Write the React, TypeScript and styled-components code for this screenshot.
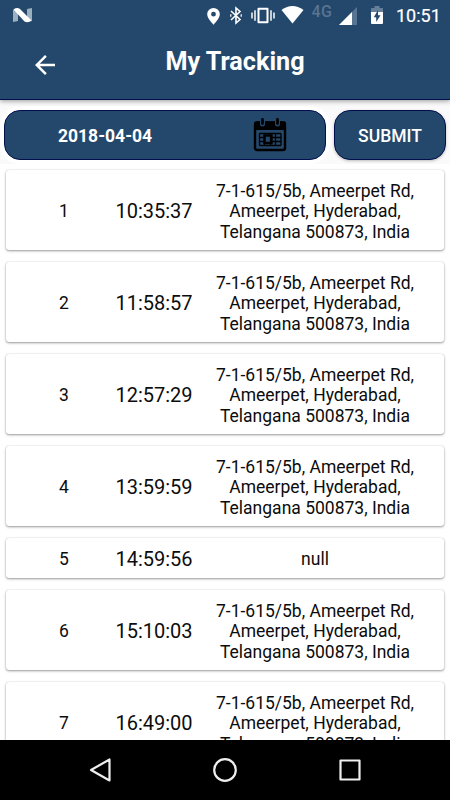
import React from "react";
import styled, { createGlobalStyle } from "styled-components";

const BLUE = "#24486c";

const GlobalStyle = createGlobalStyle`
  * { box-sizing: border-box; }
  body { margin: 0; background: #fff; font-family: Roboto, sans-serif; overflow: hidden; }
`;

const Screen = styled.div`
  width: 450px;
  height: 800px;
  display: flex;
  flex-direction: column;
  overflow: hidden;
  color: #0c0c0c;
`;

const Header = styled.header`
  flex: none;
  height: 100px;
  background: ${BLUE};
  border-bottom: 1px solid #020f4c;
  box-shadow: 0 1px 5px rgba(0, 0, 0, 0.4);
  z-index: 1;
`;

const StatusBar = styled.div`
  height: 30px;
  display: flex;
  align-items: flex-start;
`;

const StatusIcon = styled.svg<{ $left: number; $top: number }>`
  display: block;
  flex: none;
  margin-left: ${(p) => p.$left}px;
  margin-top: ${(p) => p.$top}px;
`;

const Network = styled.span`
  width: 21px;
  margin: 2px 0 0 8px;
  font-size: 16px;
  line-height: 19px;
  font-weight: 500;
  letter-spacing: 0.5px;
  color: #597491;
`;

const Clock = styled.time`
  margin: 5px 0 0 13px;
  font-size: 18px;
  line-height: 21px;
  font-weight: 400;
  -webkit-text-stroke: 0.2px #fff;
  color: #fff;
`;

const AppBar = styled.div`
  height: 69px;
  display: grid;
  grid-template-columns: 90px 1fr 70px;
`;

const BackButton = styled.button`
  border: 0;
  padding: 19.5px 0 0 30px;
  background: none;
  display: flex;
  align-items: flex-start;
`;

const Title = styled.h1`
  margin: 17px 0 0;
  text-align: center;
  font-size: 25.2px;
  line-height: 30px;
  font-weight: 700;
  color: #fff;
`;

const Filter = styled.section`
  flex: none;
  height: 64px;
  padding: 10px 4px 4px;
  display: grid;
  grid-template-columns: 322px 112px;
  gap: 8px;
  background: #fafafa;
`;

const DateField = styled.div`
  height: 50px;
  border: 1px solid #020f4c;
  border-radius: 16px;
  background: ${BLUE};
  color: #fff;
  display: flex;
  align-items: center;
  justify-content: space-between;
  padding: 0 38px 0 53px;
  font-size: 17.5px;
  font-weight: 700;
  box-shadow: 0 0 0 4px #fff;
`;

const DateText = styled.span`
  padding-top: 2px;
`;

const Submit = styled.button`
  height: 50px;
  padding: 2px 0 0;
  border: 1px solid #020f4c;
  border-radius: 16px;
  background: ${BLUE};
  box-shadow: 0 1px 3px rgba(0, 0, 0, 0.25);
  color: #fff;
  font: 500 17.5px Roboto, sans-serif;
`;

const List = styled.main`
  flex: 1;
  min-height: 0;
  overflow: hidden;
  padding: 6px 6px 0;
  display: flex;
  flex-direction: column;
  gap: 12px;
`;

const Card = styled.article<{ $short: boolean }>`
  flex: none;
  height: ${(p) => (p.$short ? 40 : 80)}px;
  border-radius: 3px;
  background: #fff;
  box-shadow: 0 1px 2.5px rgba(0, 0, 0, 0.4), 0 0 1px rgba(0, 0, 0, 0.2);
  display: grid;
  grid-template-columns: 116px 64px 258px;
  align-items: center;
  text-align: center;
`;

const Index = styled.span`
  font-size: 17.5px;
  line-height: 20px;
  padding-top: 2px;
`;

const Time = styled.time`
  font-size: 20px;
  line-height: 24px;
  padding-top: 2px;
  justify-self: center;
`;

const Address = styled.p`
  margin: 0;
  padding-top: 2.8px;
  font-size: 17.5px;
  line-height: 20.3px;
`;

const NavBar = styled.nav`
  flex: none;
  height: 60px;
  background: #000;
  display: flex;
  justify-content: center;
  align-items: center;
  gap: 95px;
  fill: none;
  stroke: #eee;
  stroke-width: 2.2;
  stroke-linejoin: round;
`;

const ADDRESS = ["7-1-615/5b, Ameerpet Rd,", "Ameerpet, Hyderabad,", "Telangana 500873, India"];

const entries: { time: string; address: string[] }[] = [
  { time: "10:35:37", address: ADDRESS },
  { time: "11:58:57", address: ADDRESS },
  { time: "12:57:29", address: ADDRESS },
  { time: "13:59:59", address: ADDRESS },
  { time: "14:59:56", address: ["null"] },
  { time: "15:10:03", address: ADDRESS },
  { time: "16:49:00", address: ADDRESS },
];

const StatusIcons = () => (
  <>
    <StatusIcon $left={13} $top={8} width="19" height="15">
      <path d="M0 2 L5 1 V13 L0 14Z M14 1 L19 0 V13 L14 14Z" fill="#9cafbf" />
      <path d="M0.5 1.5 Q4-1 7 1 L18.5 12.5 Q15 15.5 11.5 13.5Z" fill="#fff" />
    </StatusIcon>
    <StatusIcon $left={175} $top={8} width="13" height="17">
      <path fillRule="evenodd" fill="#fff" d="M6.5 0A6.3 6.3 0 0 0 .2 6.3C.2 10.5 6.5 16.7 6.5 16.7S12.8 10.5 12.8 6.3A6.3 6.3 0 0 0 6.5 0ZM6.5 3.8A2.4 2.4 0 1 1 6.5 8.6A2.4 2.4 0 0 1 6.5 3.8Z" />
    </StatusIcon>
    <StatusIcon $left={9} $top={6} width="14" height="19">
      <path d="M2 5L11 13.5L7 17V2L11 5.5L2 14" fill="none" stroke="#fff" strokeWidth="1.6" />
      <path d="M11.5 8.3H13V10.7H11.5ZM1 8.3H2.5V10.7H1Z" fill="#d7dee5" />
    </StatusIcon>
    <StatusIcon $left={7.5} $top={7} width="24" height="17">
      <path d="M7.5 1.7H16.5V15.3H7.5Z" fill="none" stroke="#fff" strokeWidth="2" strokeLinejoin="round" />
      <path d="M4 3.2V13.8M20 3.2V13.8M1 5.5V11.5M23 5.5V11.5" stroke="#d7dee5" strokeWidth="1.8" />
    </StatusIcon>
    <StatusIcon $left={6} $top={6} width="23" height="18">
      <path d="M.5 4Q11.5-4 22.5 4L11.5 17.5Z" fill="#fff" />
    </StatusIcon>
    <Network>4G</Network>
    <StatusIcon $left={6.5} $top={7} width="18" height="18">
      <path d="M18 0V18H0Z" fill="#597491" />
      <path d="M13 5V18H0Z" fill="#fff" />
    </StatusIcon>
    <StatusIcon $left={14} $top={6} width="12" height="18">
      <path d="M0 6V2.8Q0 2 .8 2H3.5V0H8.5V2H11.2Q12 2 12 2.8V6Z" fill="#667f99" />
      <path d="M0 6H12V17Q12 18 11 18H1Q0 18 0 17Z" fill="#fff" />
      <path d="M7 4L2.8 11.3H5.2V16L9.5 9.3H7Z" fill={BLUE} />
    </StatusIcon>
  </>
);

const CalendarIcon = () => (
  <svg width="34" height="34" fill="none" stroke="#000">
    <path d="M3 3.5H31Q33 3.5 33 5.5V12H1V5.5Q1 3.5 3 3.5Z" fill="#000" stroke="none" />
    <rect x="2" y="4.5" width="30" height="27.5" rx="2" strokeWidth="2.4" />
    <path d="M9.5 1V6M24.5 1V6" stroke={BLUE} strokeWidth="5" strokeLinecap="round" />
    <path d="M9.5 1.5V5.5M24.5 1.5V5.5" strokeWidth="2.8" strokeLinecap="round" />
    <path d="M6.5 15.5H28M6.5 19.5H11M18 19.5H28M6.5 23.5H11M18 23.5H28M6.5 27.5H28M6.5 15.5V27.5M11.5 15.5V27.5M17.5 15.5V27.5M22.5 15.5V27.5M28 15.5V27.5" strokeWidth="1.3" />
    <rect x="11.5" y="17.5" width="7" height="7.5" strokeWidth="2.4" />
  </svg>
);

export default function App() {
  return (
    <Screen>
      <GlobalStyle />
      <Header>
        <StatusBar>
          <StatusIcons />
          <Clock>10:51</Clock>
        </StatusBar>
        <AppBar>
          <BackButton aria-label="Back">
            <svg width="30" height="30" viewBox="0 0 24 24" fill="#fff">
              <path d="M20 11H7.83l5.59-5.59L12 4l-8 8 8 8 1.41-1.41L7.83 13H20v-2z" />
            </svg>
          </BackButton>
          <Title>My Tracking</Title>
        </AppBar>
      </Header>
      <Filter>
        <DateField>
          <DateText>2018-04-04</DateText>
          <CalendarIcon />
        </DateField>
        <Submit>SUBMIT</Submit>
      </Filter>
      <List>
        {entries.map((entry, i) => (
          <Card key={entry.time} $short={entry.address.length === 1}>
            <Index>{i + 1}</Index>
            <Time>{entry.time}</Time>
            <Address>
              {entry.address.map((line, n) => (
                <React.Fragment key={line}>
                  {n > 0 && <br />}
                  {line}
                </React.Fragment>
              ))}
            </Address>
          </Card>
        ))}
      </List>
      <NavBar>
        <svg width="30" height="30"><path d="M24.5 4.5V25.5L6 15Z" /></svg>
        <svg width="30" height="30"><circle cx="15" cy="15" r="10.8" /></svg>
        <svg width="30" height="30"><rect x="5.5" y="5.5" width="19" height="19" /></svg>
      </NavBar>
    </Screen>
  );
}
